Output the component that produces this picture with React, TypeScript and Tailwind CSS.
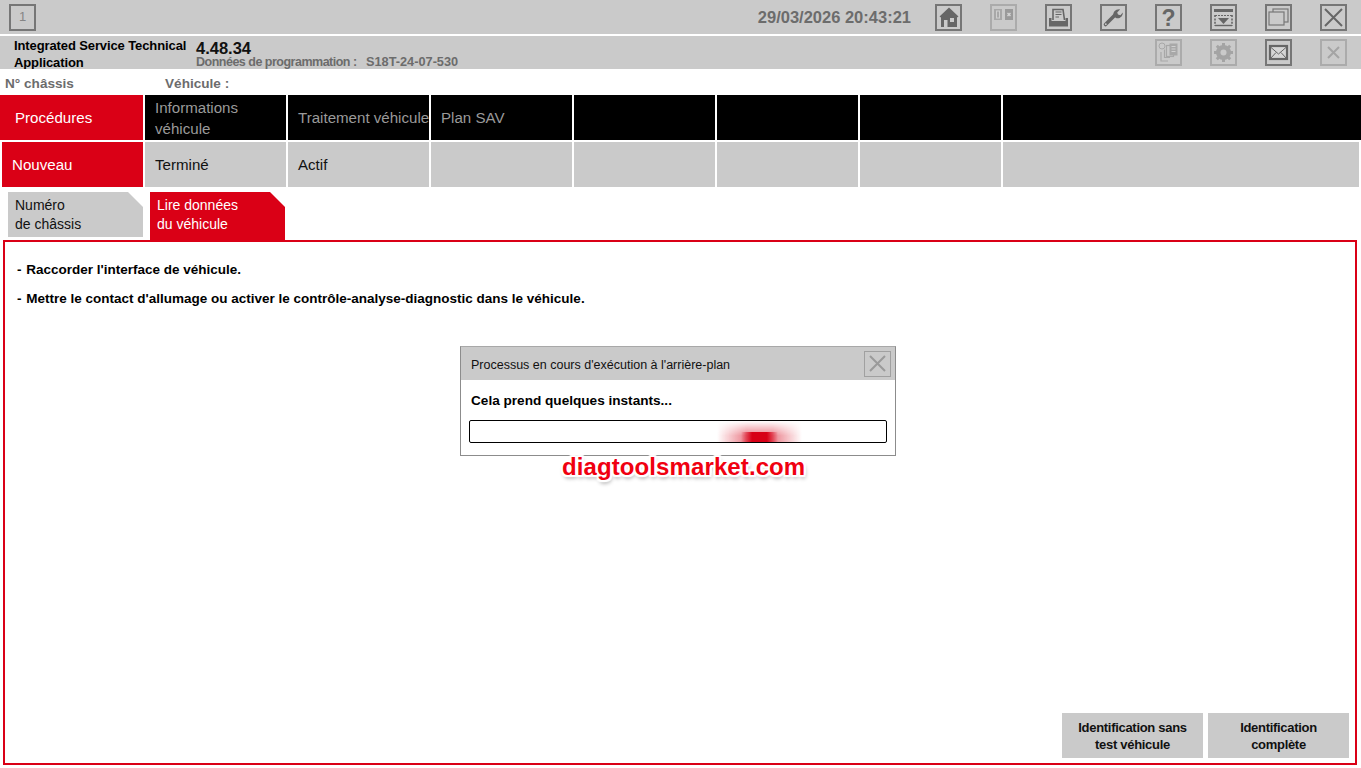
const stroke = '#666666';

function IconBox({ children, dim }: { children: React.ReactNode; dim?: boolean }) {
  return (
    <div className={`w-[27px] h-[27px] border-2 ${dim ? 'border-[#ababab]' : 'border-[#767676]'} flex items-center justify-center`}>
      <svg width="23" height="23" viewBox="0 0 23 23">{children}</svg>
    </div>
  );
}

const topIcons = [
  // home
  <IconBox key="home"><path d="M12 1.5 L21.5 10.5 L20 11.5 L20 21 L4 21 L4 11.5 L2.5 10.5 Z" fill={stroke} /><rect x="7" y="14" width="3.5" height="7" fill="#cacaca" /><rect x="13" y="12" width="4" height="4" fill="#cacaca" /></IconBox>,
  // split
  <IconBox key="split" dim><rect x="2" y="3" width="8" height="11" fill="#a8a8a8" /><rect x="4.5" y="5" width="3" height="7" fill="none" stroke="#cfcfcf" /><rect x="13" y="3" width="8" height="11" fill="#9a9a9a" /><path d="M15.5 7 L18.5 10 M18.5 7 L15.5 10" stroke="#d4d4d4" strokeWidth="1.4" /></IconBox>,
  // printer
  <IconBox key="print"><path d="M6 14 V3.5 H16 L17.5 14" fill="#cacaca" stroke={stroke} strokeWidth="1.6" /><path d="M8.5 6 H14.5 M8.5 8.5 H14.5 M8.5 11 H12" stroke={stroke} strokeWidth="1.2" /><path d="M2 12 H4.5 V15 H18.5 V12 H21 V20.5 H2 Z" fill={stroke} /></IconBox>,
  // wrench
  <IconBox key="wrench"><path d="M3.5 18.5 L13 9" stroke={stroke} strokeWidth="3.6" strokeLinecap="round" /><path d="M11.5 10 C10.6 6.4 13.4 3 18 3.4 L15.2 6.4 L16 8.6 L18.4 9.2 L20.8 6.4 C21 10.4 17.6 13 14 12 Z" fill={stroke} /><circle cx="3.8" cy="18.2" r="0.9" fill="#cacaca" /></IconBox>,
  // help
  <IconBox key="help"><text x="11.5" y="19.5" textAnchor="middle" fontFamily="'Liberation Sans', sans-serif" fontWeight="700" fontSize="23" fill={stroke}>?</text></IconBox>,
  // panel
  <IconBox key="panel"><rect x="2" y="3" width="19" height="3" fill={stroke} /><path d="M3 9 V20 M20 9 V20" stroke={stroke} strokeWidth="1.6" strokeDasharray="2 1.4" /><path d="M3 9.5 H20" stroke={stroke} strokeWidth="1" strokeDasharray="2 1" /><path d="M6 12 H17 L11.5 18 Z" fill={stroke} /><path d="M3 19.5 H20" stroke={stroke} strokeWidth="1.4" /></IconBox>,
  // windows
  <IconBox key="windows"><rect x="6" y="3" width="15" height="13" fill="none" stroke="#777777" strokeWidth="1.2" /><rect x="2" y="6" width="15" height="13" fill="#cacaca" stroke="#777777" strokeWidth="1.2" /></IconBox>,
  // close
  <IconBox key="close"><path d="M3 3 L20 20 M20 3 L3 20" stroke={stroke} strokeWidth="2" /></IconBox>,
];

const secondIcons = [
  <IconBox key="copy" dim><circle cx="5" cy="5" r="3" fill="none" stroke="#a8a8a8" strokeWidth="1" /><path d="M4 11 V20 H11 M7.5 8.5 V16.5 H13" fill="none" stroke="#a8a8a8" strokeWidth="1.2" /><rect x="9.5" y="4.5" width="7" height="11" fill="none" stroke="#a8a8a8" strokeWidth="1.2" /><rect x="12.5" y="2.5" width="8" height="12" fill="#a8a8a8" /><path d="M14.5 5.5 H18.5 M14.5 8 H18.5 M14.5 10.5 H18.5" stroke="#d0d0d0" strokeWidth="1" /></IconBox>,
  <IconBox key="gear" dim><circle cx="11.5" cy="11.5" r="5.5" fill="none" stroke="#a4a4a4" strokeWidth="4" /><path d="M11.5 2 V21 M2 11.5 H21 M4.8 4.8 L18.2 18.2 M18.2 4.8 L4.8 18.2" stroke="#a4a4a4" strokeWidth="3" /><circle cx="11.5" cy="11.5" r="3" fill="#cacaca" /></IconBox>,
  <IconBox key="mail"><rect x="3" y="5" width="17" height="13" fill="#d6d6d6" stroke={stroke} strokeWidth="2.2" /><path d="M3.5 6 L11.5 13 L19.5 6 M3.5 17.5 L9 11.5 M19.5 17.5 L14 11.5" fill="none" stroke={stroke} strokeWidth="1" /></IconBox>,
  <IconBox key="x" dim><path d="M6 6 L17 17 M17 6 L6 17" stroke="#a4a4a4" strokeWidth="2" /></IconBox>,
];

const blackCols = ['', '', '', ''];

export default function App() {
  return (
    <div className="relative w-[1361px] h-[768px] overflow-hidden bg-white font-['Liberation_Sans',Arial,sans-serif]">
      {/* Title bar */}
      <div className="h-[34px] bg-[#cacaca] flex items-center justify-between pl-[9px] pr-[14px]">
        <div className="w-[27px] h-[27px] border-2 border-[#767676] flex items-center justify-center text-[13px] text-[#858585]">1</div>
        <div className="flex items-center">
          <span className="text-[16.5px] font-bold text-[#6c6c6c] mr-[24px]">29/03/2026 20:43:21</span>
          <div className="flex gap-[28px]">{topIcons}</div>
        </div>
      </div>

      {/* App info bar */}
      <div className="mt-[2px] h-[33px] bg-[#cacaca] flex justify-between pr-[14px] overflow-hidden">
        <div className="flex">
          <div className="w-[196px] pl-[14px] pt-[1px] text-[13px] font-bold leading-[17px] tracking-[-0.11px] text-black">
            Integrated Service Technical<br />Application
          </div>
          <div>
            <div className="text-[16.5px] font-bold leading-[18px] mt-[3px] text-[#111]">4.48.34</div>
            <div className="flex text-[12.5px] font-bold leading-[14px] -mt-[2px] text-[#6c6c6c] whitespace-nowrap">
              <span className="w-[170px] tracking-[-0.5px]">Données de programmation :</span>
              <span className="text-[12.75px]">S18T-24-07-530</span>
            </div>
          </div>
        </div>
        <div className="flex items-center gap-[28px]">{secondIcons}</div>
      </div>

      {/* Vehicle line */}
      <div className="h-[26px] flex items-center pl-[5px] pt-[4px] text-[13.6px] font-bold text-[#6c6c6c]">
        <span className="w-[160px]">N° châssis</span>
        <span>Véhicule :</span>
      </div>

      {/* Main navigation */}
      <div className="h-[45px] flex gap-[2px] text-[15.1px]">
        <div className="w-[143px] bg-[#da0016] text-white flex items-center pl-[15px] pt-[1px]">Procédures</div>
        <div className="w-[141px] bg-black text-[#9a9a9a] flex items-center pl-[10px] leading-[21px]">Informations<br />véhicule</div>
        <div className="w-[141px] bg-black text-[#9a9a9a] flex items-center pl-[10px] pt-[1px] whitespace-nowrap">Traitement véhicule</div>
        <div className="w-[141px] bg-black text-[#9a9a9a] flex items-center pl-[10px] pt-[1px]">Plan SAV</div>
        {blackCols.slice(1).map((_, i) => (
          <div key={i} className="w-[141px] bg-black" />
        ))}
        <div className="flex-1 bg-black" />
      </div>

      {/* Sub navigation */}
      <div className="mt-[2px] h-[45px] flex gap-[2px] pl-[2px] pr-[2px] text-[15.1px]">
        <div className="w-[141px] bg-[#da0016] text-white flex items-center pl-[10px] pt-[1px]">Nouveau</div>
        <div className="w-[141px] bg-[#cacaca] text-[#111] flex items-center pl-[10px] pt-[1px]">Terminé</div>
        <div className="w-[141px] bg-[#cacaca] text-[#111] flex items-center pl-[10px] pt-[1px]">Actif</div>
        {blackCols.map((_, i) => (
          <div key={i} className="w-[141px] bg-[#cacaca]" />
        ))}
        <div className="flex-1 bg-[#cacaca]" />
      </div>

      {/* Tabs */}
      <div className="mt-[5px] h-[48px] flex items-start gap-[7px] pl-[8px] text-[14px] leading-[19px]">
        <div className="w-[135px] h-[45px] bg-[#cacaca] text-[#111] pl-[7px] pt-[4px] [clip-path:polygon(0_0,calc(100%-15px)_0,100%_15px,100%_100%,0_100%)]">
          Numéro<br />de châssis
        </div>
        <div className="w-[135px] h-[48px] bg-[#da0016] text-white pl-[7px] pt-[4px] [clip-path:polygon(0_0,calc(100%-15px)_0,100%_15px,100%_100%,0_100%)]">
          Lire données<br />du véhicule
        </div>
      </div>

      {/* Content panel */}
      <div className="ml-[3px] w-[1354px] h-[525px] border-2 border-[#da0016] flex flex-col justify-between pl-[12px] pr-[6px] pb-[5px]">
        <div className="pt-[20px] text-[13.5px] font-bold text-black leading-[16px]">
          <p><span className="mr-[1px]">-</span> Raccorder l'interface de véhicule.</p>
          <p className="mt-[13px]"><span className="mr-[1px]">-</span> Mettre le contact d'allumage ou activer le contrôle-analyse-diagnostic dans le véhicule.</p>
        </div>
        <div className="flex justify-end gap-[5px] text-[13px] font-bold text-[#111] leading-[17px] tracking-[-0.3px] text-center">
          <div className="w-[141px] h-[45px] bg-[#cacaca] flex items-center justify-center">Identification sans<br />test véhicule</div>
          <div className="w-[141px] h-[45px] bg-[#cacaca] flex items-center justify-center">Identification<br />complète</div>
        </div>
      </div>

      {/* Background process dialog */}
      <div className="absolute left-[460px] top-[346px] w-[436px] h-[110px] bg-white border border-[#8c8c8c] border-t-[#a8a8a8]">
        <div className="h-[33px] bg-[#cacaca] flex items-center justify-between pl-[10px] pr-[4px]">
          <span className="pt-[3px] text-[12.5px] text-[#111]">Processus en cours d'exécution à l'arrière-plan</span>
          <div className="w-[27px] h-[26px] border border-[#a0a0a0] flex items-center justify-center">
            <svg width="23" height="23" viewBox="0 0 23 23"><path d="M4 4 L19 19 M19 4 L4 19" stroke="#9a9a9a" strokeWidth="2" /></svg>
          </div>
        </div>
        <div className="pl-[10px] pt-[12px] text-[13.6px] font-bold text-black leading-[17px]">Cela prend quelques instants...</div>
        <div className="relative mx-[8px] mt-[11px] h-[23px] border border-black rounded-[2px] overflow-hidden">
          <div className="absolute left-[247px] top-0 bottom-0 w-[85px] bg-[linear-gradient(90deg,transparent,#d7001680_35%,#d7001680_65%,transparent)] [mask-image:linear-gradient(180deg,transparent,black_70%)]" />
          <div className="absolute left-[271px] top-[11px] bottom-0 w-[37px] bg-[linear-gradient(90deg,transparent,#d70016_30%,#d70016_70%,transparent)]" />
        </div>
      </div>

      {/* Watermark */}
      <div className="absolute left-[562px] top-[453px] text-[24px] font-bold leading-[28px] tracking-[0.1px] text-[#f00010] [text-shadow:2px_0_1px_#fff,-2px_0_1px_#fff,0_2px_1px_#fff,0_-2px_1px_#fff,2px_2px_1px_#fff,-2px_-2px_1px_#fff,2px_-2px_1px_#fff,-2px_2px_1px_#fff,1px_3px_4px_#888]">
        diagtoolsmarket.com
      </div>
    </div>
  );
}
